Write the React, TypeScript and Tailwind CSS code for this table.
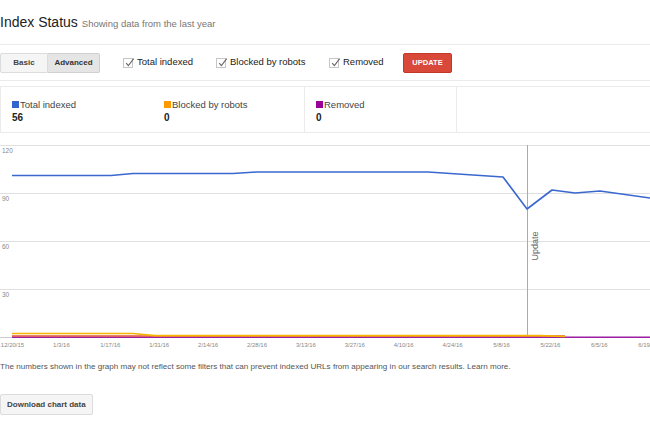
import React from "react";

type Series = { color: string; width: number; points: string };

const series: Series[] = [
  { color: "#9c1fa3", width: 1.6, points: "12,338.2 650,338.2" },
  { color: "#e0533a", width: 1.6, points: "12,337 565,337" },
  { color: "#f4b400", width: 1.6, points: "12,334.5 133,334.5 155,336.6 540,336.6 565,337.5" },
  {
    color: "#3a68cf",
    width: 1.6,
    points:
      "12,176.5 111,176.5 133,174.5 233,174.5 257,173 428,173 503,178 527,210 552,191 575,194 600,192 650,199",
  },
];

const xLabels = [
  "12/20/15", "1/3/16", "1/17/16", "1/31/16", "2/14/16", "2/28/16", "3/13/16",
  "3/27/16", "4/10/16", "4/24/16", "5/8/16", "5/22/16", "6/5/16", "6/19/16",
];

const yTicks = [
  { label: "120", y: 146.5 },
  { label: "90", y: 194.5 },
  { label: "60", y: 242.5 },
  { label: "30", y: 290.5 },
];

const stats = [
  { name: "Total indexed", value: "56", color: "bg-[#3366cc]" },
  { name: "Blocked by robots", value: "0", color: "bg-[#ff9900]" },
  { name: "Removed", value: "0", color: "bg-[#990099]" },
];

const filters = ["Total indexed", "Blocked by robots", "Removed"];

const CheckBox = ({ label }: { label: string }) => (
  <label className="flex items-center gap-[4px]">
    <span className="relative w-[10px] h-[10px] border border-[#c6c6c6] bg-white">
      <svg viewBox="0 0 10 10" className="absolute -top-[2px] left-0 w-[11px] h-[11px]">
        <path d="M2 5.5 L4 7.8 L8.8 1.5" fill="none" stroke="#666" strokeWidth="1" />
      </svg>
    </span>
    <span className="text-[9.5px] text-[#222]">{label}</span>
  </label>
);

const Chart = () => (
  <svg width="650" height="215" viewBox="0 140 650 215" className="block">
    {yTicks.map((t) => (
      <g key={t.label}>
        <line x1="0" x2="650" y1={t.y} y2={t.y} stroke="#e0e0e0" strokeWidth="1" />
        <text x="2" y={t.y + 7.5} fontSize="6.5" fill="#888">{t.label}</text>
      </g>
    ))}
    <line x1="0" x2="650" y1="338.5" y2="338.5" stroke="#ccc" strokeWidth="1" />
    <line x1="527.5" x2="527.5" y1="146" y2="338" stroke="#aaa" strokeWidth="1" />
    <text
      x="537.5"
      y="247"
      fontSize="9"
      fill="#666"
      textAnchor="middle"
      transform="rotate(-90 537.5 247)"
    >
      Update
    </text>
    {series.map((s) => (
      <polyline
        key={s.color}
        points={s.points}
        fill="none"
        stroke={s.color}
        strokeWidth={s.width}
        strokeLinejoin="round"
      />
    ))}
    {xLabels.map((l, i) => (
      <text key={l} x={12.5 + i * 48.9} y="347.5" fontSize="6" fill="#888" textAnchor="middle">
        {l}
      </text>
    ))}
  </svg>
);

export default function App() {
  return (
    <div className="w-[650px] h-[423px] overflow-hidden bg-white font-['Liberation_Sans',Arial,sans-serif] text-[#222]">
      {/* title */}
      <div className="h-[45px] border-b border-[#ebebeb] flex items-baseline gap-[4px] pt-[14px]">
        <h1 className="text-[14px] leading-[16px] text-[#222]">Index Status</h1>
        <span className="text-[9.5px] text-[#777]">Showing data from the last year</span>
      </div>

      {/* toolbar */}
      <div className="h-[36px] border-b border-[#ebebeb] flex items-center">
        <div className="flex h-[20px] mt-[1px]">
          <button className="w-[48px] h-full bg-[#f5f5f5] border border-[#dcdcdc] rounded-l-[2px] text-[8px] font-bold text-[#444]">
            Basic
          </button>
          <button className="w-[52px] h-full bg-[#e5e5e5] border border-[#d0d0d0] border-l-0 rounded-r-[2px] text-[8px] font-bold text-[#333]">
            Advanced
          </button>
        </div>
        <div className="ml-[23px] flex items-center">
          <div className="w-[93px]"><CheckBox label={filters[0]} /></div>
          <div className="w-[113px]"><CheckBox label={filters[1]} /></div>
          <div className="w-[74px]"><CheckBox label={filters[2]} /></div>
        </div>
        <button className="w-[49px] h-[20px] mt-[1px] bg-[#d9493a] border border-[#c53727] rounded-[2px] text-[7.5px] font-bold text-white">
          UPDATE
        </button>
      </div>

      {/* stats */}
      <div className="mt-[5px] h-[47px] flex border-y border-l border-[#ebebeb]">
        {stats.map((s, i) => (
          <div
            key={s.name}
            className={`w-[152px] pl-[11px] pt-[12px] ${i > 0 ? "border-r border-[#ebebeb]" : ""}`}
          >
            <div className="flex items-center gap-[1px] text-[9.5px] leading-[11px] text-[#444]">
              <span className={`w-[7px] h-[7px] ${s.color}`} />
              {s.name}
            </div>
            <div className="text-[10px] leading-[14px] font-bold text-[#222] mt-[1px]">{s.value}</div>
          </div>
        ))}
        <div className="flex-1" />
      </div>

      {/* chart */}
      <div className="mt-[6px]">
        <Chart />
      </div>

      <p className="mt-[8px] text-[8.1px] text-[#555] leading-[10px] whitespace-nowrap">
        The numbers shown in the graph may not reflect some filters that can prevent indexed URLs from appearing in our search results. Learn more.
      </p>

      <button className="mt-[22px] h-[21px] px-[6px] bg-[#f5f5f5] border border-[#dcdcdc] rounded-[2px] text-[8px] font-bold text-[#444]">
        Download chart data
      </button>
    </div>
  );
}
